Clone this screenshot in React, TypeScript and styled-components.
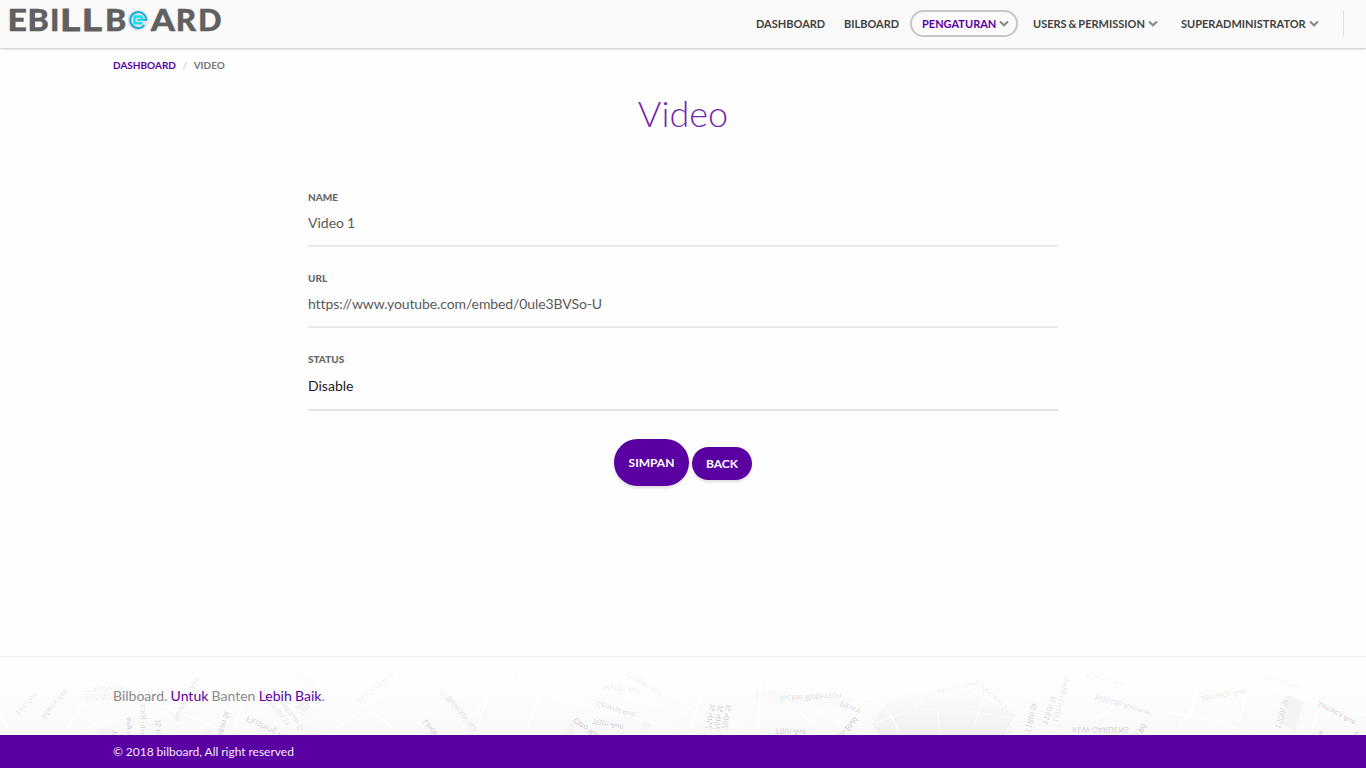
import React from "react";
import styled, { createGlobalStyle, css } from "styled-components";

const purple = "#5a00a2";

const GlobalStyle = createGlobalStyle`
  * { box-sizing: border-box; }
  html, body { margin: 0; padding: 0; }
  body { background: #fefefe; font-family: Lato, sans-serif; font-size: 14px; color: #5a5a5a; overflow: hidden; }
`;

const Page = styled.div`
  display: flex;
  flex-direction: column;
  height: 768px;
`;

const Header = styled.header`
  display: flex;
  justify-content: space-between;
  height: 48px;
  flex: none;
  background: #fafafa;
  box-shadow: 0 1px 2px rgba(0, 0, 0, 0.23);
`;

const LogoDrawing = styled.svg`
  display: block;
  width: 230px;
  height: 48px;
`;

const Nav = styled.nav`
  display: flex;
  align-items: flex-start;
  padding: 10px 22px 0 0;
`;

const NavItem = styled.a<{ $width: number; $active?: boolean }>`
  display: flex;
  align-items: center;
  gap: 3px;
  width: ${(p) => p.$width}px;
  height: 27px;
  padding-left: 10px;
  border: 2px solid transparent;
  border-radius: 14px;
  font-size: 11px;
  font-weight: 700;
  line-height: 23px;
  white-space: nowrap;
  word-spacing: -0.8px;
  color: #404040;
  ${(p) =>
    p.$active &&
    css`
      color: ${purple};
      border-color: #c6c6c6;
      margin-right: 3px;
    `}
`;

const Caret = styled.svg`
  width: 10px;
  height: 7px;
  flex: none;
`;

const NavDivider = styled.span`
  width: 1px;
  height: 27px;
  background: #dedede;
`;

const Main = styled.main`
  flex: 1;
`;

const Breadcrumb = styled.div`
  display: flex;
  gap: 6.5px;
  padding: 10px 0 0 113px;
  font-size: 10px;
  line-height: 15px;
  font-weight: 700;
  color: #777;
`;

const Crumb = styled.a`
  color: ${purple};
`;

const Slash = styled.span`
  color: #ccc;
`;

const Title = styled.h1`
  margin: 16px 0 0;
  font-size: 36px;
  line-height: 48px;
  font-weight: 300;
  text-align: center;
  color: ${purple};
  opacity: 0.85;
`;

const Form = styled.form`
  width: 750px;
  margin: 54px auto 0;
`;

const Field = styled.div<{ $tall?: boolean }>`
  height: ${(p) => (p.$tall ? 58 : 56)}px;
  margin-bottom: 25px;
  border-bottom: 2px solid ${(p) => (p.$tall ? "#e3e3e3" : "#e9e9e9")};
`;

const Label = styled.div`
  font-size: 10px;
  line-height: 12px;
  font-weight: 900;
  color: #666;
`;

const Value = styled.div<{ $select?: boolean; $tight?: boolean }>`
  padding-top: ${(p) => (p.$select ? 11 : 10)}px;
  line-height: 20px;
  letter-spacing: ${(p) => (p.$tight ? "-0.1px" : "normal")};
  word-spacing: -0.6px;
  color: ${(p) => (p.$select ? "#222" : "#5a5a5a")};
`;

const Actions = styled.div`
  display: flex;
  justify-content: center;
  align-items: center;
  gap: 3px;
  margin-top: 28px;
`;

const Button = styled.button<{ $large?: boolean }>`
  width: ${(p) => (p.$large ? 75 : 60)}px;
  height: ${(p) => (p.$large ? 47 : 33)}px;
  margin: ${(p) => (p.$large ? "0" : "2px 0 0")};
  padding: 0;
  border: 0;
  border-radius: ${(p) => (p.$large ? 24 : 17)}px;
  background: ${purple};
  color: #fff;
  font: 700 12px Lato, sans-serif;
  box-shadow: 0 2px 3px rgba(0, 0, 0, 0.13);
`;

const Footer = styled.footer`
  position: relative;
  height: 79px;
  flex: none;
  border-top: 1px solid #eee;
`;

const MapBackdrop = styled.svg`
  position: absolute;
  inset: 0;
  width: 1366px;
  height: 78px;
`;

const Tagline = styled.p`
  position: relative;
  margin: 0;
  padding: 29px 0 0 113px;
  line-height: 20px;
  word-spacing: -0.3px;
  color: #8a8a8a;
`;

const Accent = styled.span`
  color: ${purple};
`;

const Copyright = styled.div`
  height: 33px;
  flex: none;
  padding-left: 113px;
  background: ${purple};
  color: #f1e9f7;
  font-size: 12px;
  line-height: 33px;
  word-spacing: -0.2px;
`;

type Letter = [string, number, number, number];

// character, left edge, advance width, weight
const letters: Letter[] = [
  ["E", 7.6, 19.4, 900],
  ["B", 27.5, 21.3, 900],
  ["I", 50, 9.4, 900],
  ["L", 60, 20.2, 700],
  ["L", 81.8, 20.2, 700],
  ["B", 105, 21.3, 900],
  ["A", 150.8, 24.2, 900],
  ["R", 175.8, 20.4, 900],
  ["D", 198, 23.6, 900],
];

function Logo() {
  return (
    <LogoDrawing viewBox="0 0 230 48" aria-label="Ebillboard">
      <g fontFamily="Lato" fontSize="30.2" fill="#606060" stroke="#606060">
        {letters.map(([char, x, width, weight], i) => (
          <text key={i} x={x} y="30.8" textLength={width} lengthAdjust="spacingAndGlyphs" fontWeight={weight} strokeWidth={weight === 700 ? 0.8 : 0.4}>
            {char}
          </text>
        ))}
      </g>
      <circle cx="138" cy="20" r="10.5" fill="#e4e4e4" />
      <path d="M144.4 25.2a8 8 0 1 1 1.8-5.4h-4" fill="none" stroke="#12aee0" strokeWidth="2" />
      <path d="M134 16.5h6q2 0 2 1.7t-2 1.7h-3M134.5 16.5v6.8h8" fill="none" stroke="#12dff2" strokeWidth="2.4" />
    </LogoDrawing>
  );
}

function Chevron() {
  return (
    <Caret viewBox="0 0 10 7">
      <path d="M1 1.4l4 3.8 4-3.8" fill="none" stroke="#888" strokeWidth="2.1" />
    </Caret>
  );
}

type Street = [string, number, number, number, number, number];

// label, x, y, rotation, opacity, font size; the map is mirrored top to bottom
const streets: Street[] = [
  ["Lee Ave", 16, 55, -48, 0.13, 8],
  ["Marcy Ave", 41, 59, -50, 0.16, 8],
  ["TRIANGLE", 87, 29, 0, 0.09, 8],
  ["BROADWAY", 84, 37, 0, 0.09, 8],
  ["Bedford Ave", 111, 14, 10, 0.03, 8],
  ["St", 112, 81, -88, 0.26, 8],
  ["n Ave", 126, 79, -88, 0.26, 8],
  ["erto Rico", 140, 79, -88, 0.19, 8],
  ["ht St", 155, 79, -88, 0.22, 8],
  ["Bushwick Ave", 173, 62, -62, 0.12, 8],
  ["ogan St", 218, 79, -75, 0.24, 8],
  ["Flushing Ave", 248, 58, 28, 0.2, 9],
  ["Jefferson St", 264, 34, 50, 0.13, 8],
  ["Troutman St", 279, 38, 52, 0.15, 8],
  ["Myrtle Ave", 300, 14, 45, 0.05, 8],
  ["Wyckoff Ave", 357, 43, -40, 0.08, 8],
  ["Woodward Ave", 443, 32, 52, 0.07, 8],
  ["Linden", 426, 62, 50, 0.25, 8],
  ["Bleecker Ave", 450, 38, 50, 0.14, 8],
  ["Seneca Ave", 487, 17, 0, 0.04, 8],
  ["Myrtle Ave", 603, 27, 7, 0.1, 8],
  ["Cooper Ave", 628, 14, 32, 0.07, 8],
  ["Central Ave", 597, 44, 17, 0.18, 8],
  ["70th Ave", 593, 61, 13, 0.24, 8],
  ["Otto Rd", 576, 60, 38, 0.28, 8],
  ["75th St", 705, 72, -78, 0.24, 8],
  ["76th St", 713, 73, -78, 0.24, 8],
  ["78th St", 721, 72, -78, 0.24, 8],
  ["78th Ave", 775, 71, 3, 0.25, 8],
  ["Jackie Robinson", 779, 39, -3, 0.15, 9],
  ["Pkwy", 842, 43, 27, 0.17, 9],
  ["en Blvd", 837, 79, -48, 0.28, 8],
  ["Myrtle Ave", 937, 31, -10, 0.08, 8],
  ["Park Lane S", 978, 22, 43, 0.1, 8],
  ["118th St", 1025, 75, -77, 0.23, 8],
  ["118th St", 1042, 67, -72, 0.19, 8],
  ["Lefferts Blvd", 1053, 64, -75, 0.14, 8],
  ["Hillside Avenue", 1096, 37, 17, 0.15, 8.5],
  ["Atlantic Ave", 1085, 16, 12, 0.06, 8],
  ["KEW GARDENS", 1072, 70, 0, 0.24, 7.9],
  ["n Rd", 1133, 78, -49, 0.28, 8],
  ["Jamaica Ave", 1201, 39, -9, 0.12, 8.5],
  ["Archer Ave", 1265, 17, 18, 0.06, 8],
  ["150th St", 1275, 71, -75, 0.2, 8],
  ["Jamaica Ave", 1319, 44, 28, 0.23, 8],
];

function FooterMap() {
  return (
    <MapBackdrop viewBox="0 0 1366 78" aria-hidden="true">
      <defs>
        <linearGradient id="fade" x1="0" y1="0" x2="0" y2="1">
          <stop offset="0" stopColor="#fefefe" />
          <stop offset="0.45" stopColor="#fdfdfd" />
          <stop offset="1" stopColor="#f9f9f9" />
        </linearGradient>
        <linearGradient id="park" x1="0" y1="0" x2="0" y2="1">
          <stop offset="0" stopColor="#fdfdfd" />
          <stop offset="1" stopColor="#f0f0f0" />
        </linearGradient>
      </defs>
      <path d="M0 0H1366V78H0Z" fill="url(#fade)" />
      <path d="M872 67L888 45L906 38L960 31L994 44L1017 55L1009 78H880Z" fill="url(#park)" />
      <path d="M755 33L810 37L855 42L843 50L755 44Z" fill="#fafafa" />
      <path d="M98 72h15v6H98zM204 72h9l-2 6h-8zM294 51l11-8 8 9-10 7zM566 78l5-15 5 15zM643 62l8 3-2 8-8-3zM1286 38l18 7-9 29-13-7z" fill="#f4f4f4" />
      <path d="M1320 78v-3h3M1355 78l2-3 2 1" fill="none" stroke="#ccc" />
      <g fill="none" stroke="#fff" strokeWidth="1.5" strokeOpacity="0.8">
        <path d="M0 58L12 78M65 75L96 25M80 72L165 49L235 78M126 78L220 19M231 78L248 34L305 56L340 26L400 78M329 78L395 26M475 78L488 38L458 78M525 78L540 36L700 78M600 33L770 78M664 28L710 70M688 78L702 36M757 78L761 20L822 75M805 48L866 78M858 43C885 34 895 66 900 78M965 30L1017 57L1005 78M1017 66L1090 78M1065 76L1120 48L1195 59L1255 76M1120 48L1190 60L1197 30M1175 78L1196 43M1240 61L1251 20M1268 31L1366 58M1310 78L1322 44" />
        <path d="M875 66L915 52L965 53L1010 61M915 52L926 35M940 75L938 53M974 67L984 45" strokeWidth="1" />
      </g>
      <g fontFamily="Lato" fill="#333">
        {streets.map(([name, x, y, angle, opacity, size], i) => (
          <text key={i} fontSize={size} fillOpacity={opacity} transform={`translate(${x} ${y}) rotate(${angle}) scale(1 -1)`}>
            {name}
          </text>
        ))}
      </g>
    </MapBackdrop>
  );
}

export default function App() {
  return (
    <Page>
      <GlobalStyle />
      <Header>
        <Logo />
        <Nav>
          <NavItem $width={88}>DASHBOARD</NavItem>
          <NavItem $width={78}>BILBOARD</NavItem>
          <NavItem $width={108} $active>PENGATURAN<Chevron /></NavItem>
          <NavItem $width={148}>USERS &amp; PERMISSION<Chevron /></NavItem>
          <NavItem $width={174}>SUPERADMINISTRATOR<Chevron /></NavItem>
          <NavDivider />
        </Nav>
      </Header>
      <Main>
        <Breadcrumb>
          <Crumb>DASHBOARD</Crumb>
          <Slash>/</Slash>
          <span>VIDEO</span>
        </Breadcrumb>
        <Title>Video</Title>
        <Form>
          <Field>
            <Label>NAME</Label>
            <Value>Video 1</Value>
          </Field>
          <Field>
            <Label>URL</Label>
            <Value $tight>https://www.youtube.com/embed/0ule3BVSo-U</Value>
          </Field>
          <Field $tall>
            <Label>STATUS</Label>
            <Value $select>Disable</Value>
          </Field>
          <Actions>
            <Button type="button" $large>SIMPAN</Button>
            <Button type="button">BACK</Button>
          </Actions>
        </Form>
      </Main>
      <Footer>
        <FooterMap />
        <Tagline>
          Bilboard. <Accent>Untuk</Accent> Banten <Accent>Lebih Baik</Accent>.
        </Tagline>
      </Footer>
      <Copyright>© 2018 bilboard, All right reserved</Copyright>
    </Page>
  );
}
